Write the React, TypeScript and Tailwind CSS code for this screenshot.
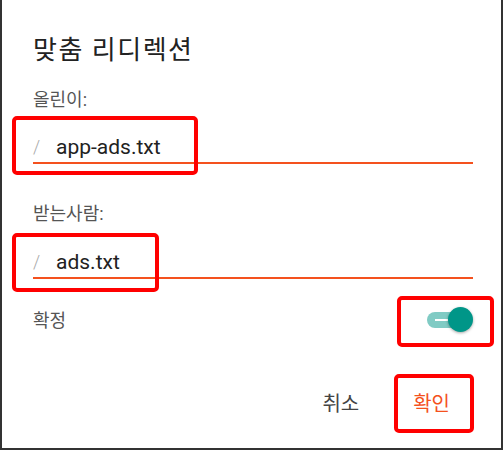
import React from 'react';

const font = { fontFamily: 'Roboto, "Noto Sans CJK KR", sans-serif' };

/** 빨간 주석 박스 */
const Mark: React.FC<{ className: string }> = ({ className }) => (
  <div className={`absolute border-[4px] border-[#ff0000] rounded-[5px] pointer-events-none ${className}`} />
);

const PathField: React.FC<{ value: string }> = ({ value }) => (
  <div className="w-[440px]">
    <div className="flex items-center h-[30px] leading-[30px]">
      <span className="text-[18px] text-[#aaaaaa] w-[23px] font-light">/</span>
      <span className="text-[21px] text-[#222222]">{value}</span>
    </div>
    <div className="h-[2px] bg-[#f4511e]" />
  </div>
);

export default function App() {
  return (
    <div className="relative w-[503px] h-[450px] bg-white border-l-2 border-r-2 border-b-2 border-[#333333] overflow-hidden" style={font}>
      <div className="pl-[31px] pr-[29px] flex flex-col">
        <h1 className="text-[26px] text-[#222222] mt-[33px] leading-[34px] tracking-[1.5px]">맞춤 리디렉션</h1>
        <label className="text-[18px] text-[#555555] mt-[21px] leading-[24px]">올린이:</label>
        <div className="mt-[20px]">
          <PathField value="app-ads.txt" />
        </div>
        <label className="text-[18px] text-[#555555] mt-[38px] leading-[24px]">받는사람:</label>
        <div className="mt-[21px]">
          <PathField value="ads.txt" />
        </div>
        <div className="flex items-center justify-between mt-[26px] h-[30px]">
          <span className="text-[18px] text-[#555555]">확정</span>
          <div className="relative w-[46px] h-[26px] mr-[-1px]">
            <div className="absolute left-0 top-[5px] w-[34px] h-[16px] rounded-full bg-[#80cbc4]">
              <div className="absolute left-[8px] top-[7px] w-[13px] h-[2px] bg-white" />
            </div>
            <div className="absolute right-0 top-0 w-[25px] h-[25px] rounded-full bg-[#009688] shadow-[0_1px_3px_rgba(0,0,0,0.35)]" />
          </div>
        </div>
        <div className="flex justify-end items-center gap-[54px] mt-[57px] pr-[22px] leading-[24px]">
          <span className="text-[20px] text-[#444444]">취소</span>
          <span className="text-[20px] text-[#f4511e]">확인</span>
        </div>
      </div>

      <Mark className="left-[10px] top-[116px] w-[186px] h-[59px]" />
      <Mark className="left-[10px] top-[233px] w-[147px] h-[59px]" />
      <Mark className="left-[395px] top-[296px] w-[97px] h-[51px]" />
      <Mark className="left-[392px] top-[374px] w-[80px] h-[59px]" />
    </div>
  );
}
